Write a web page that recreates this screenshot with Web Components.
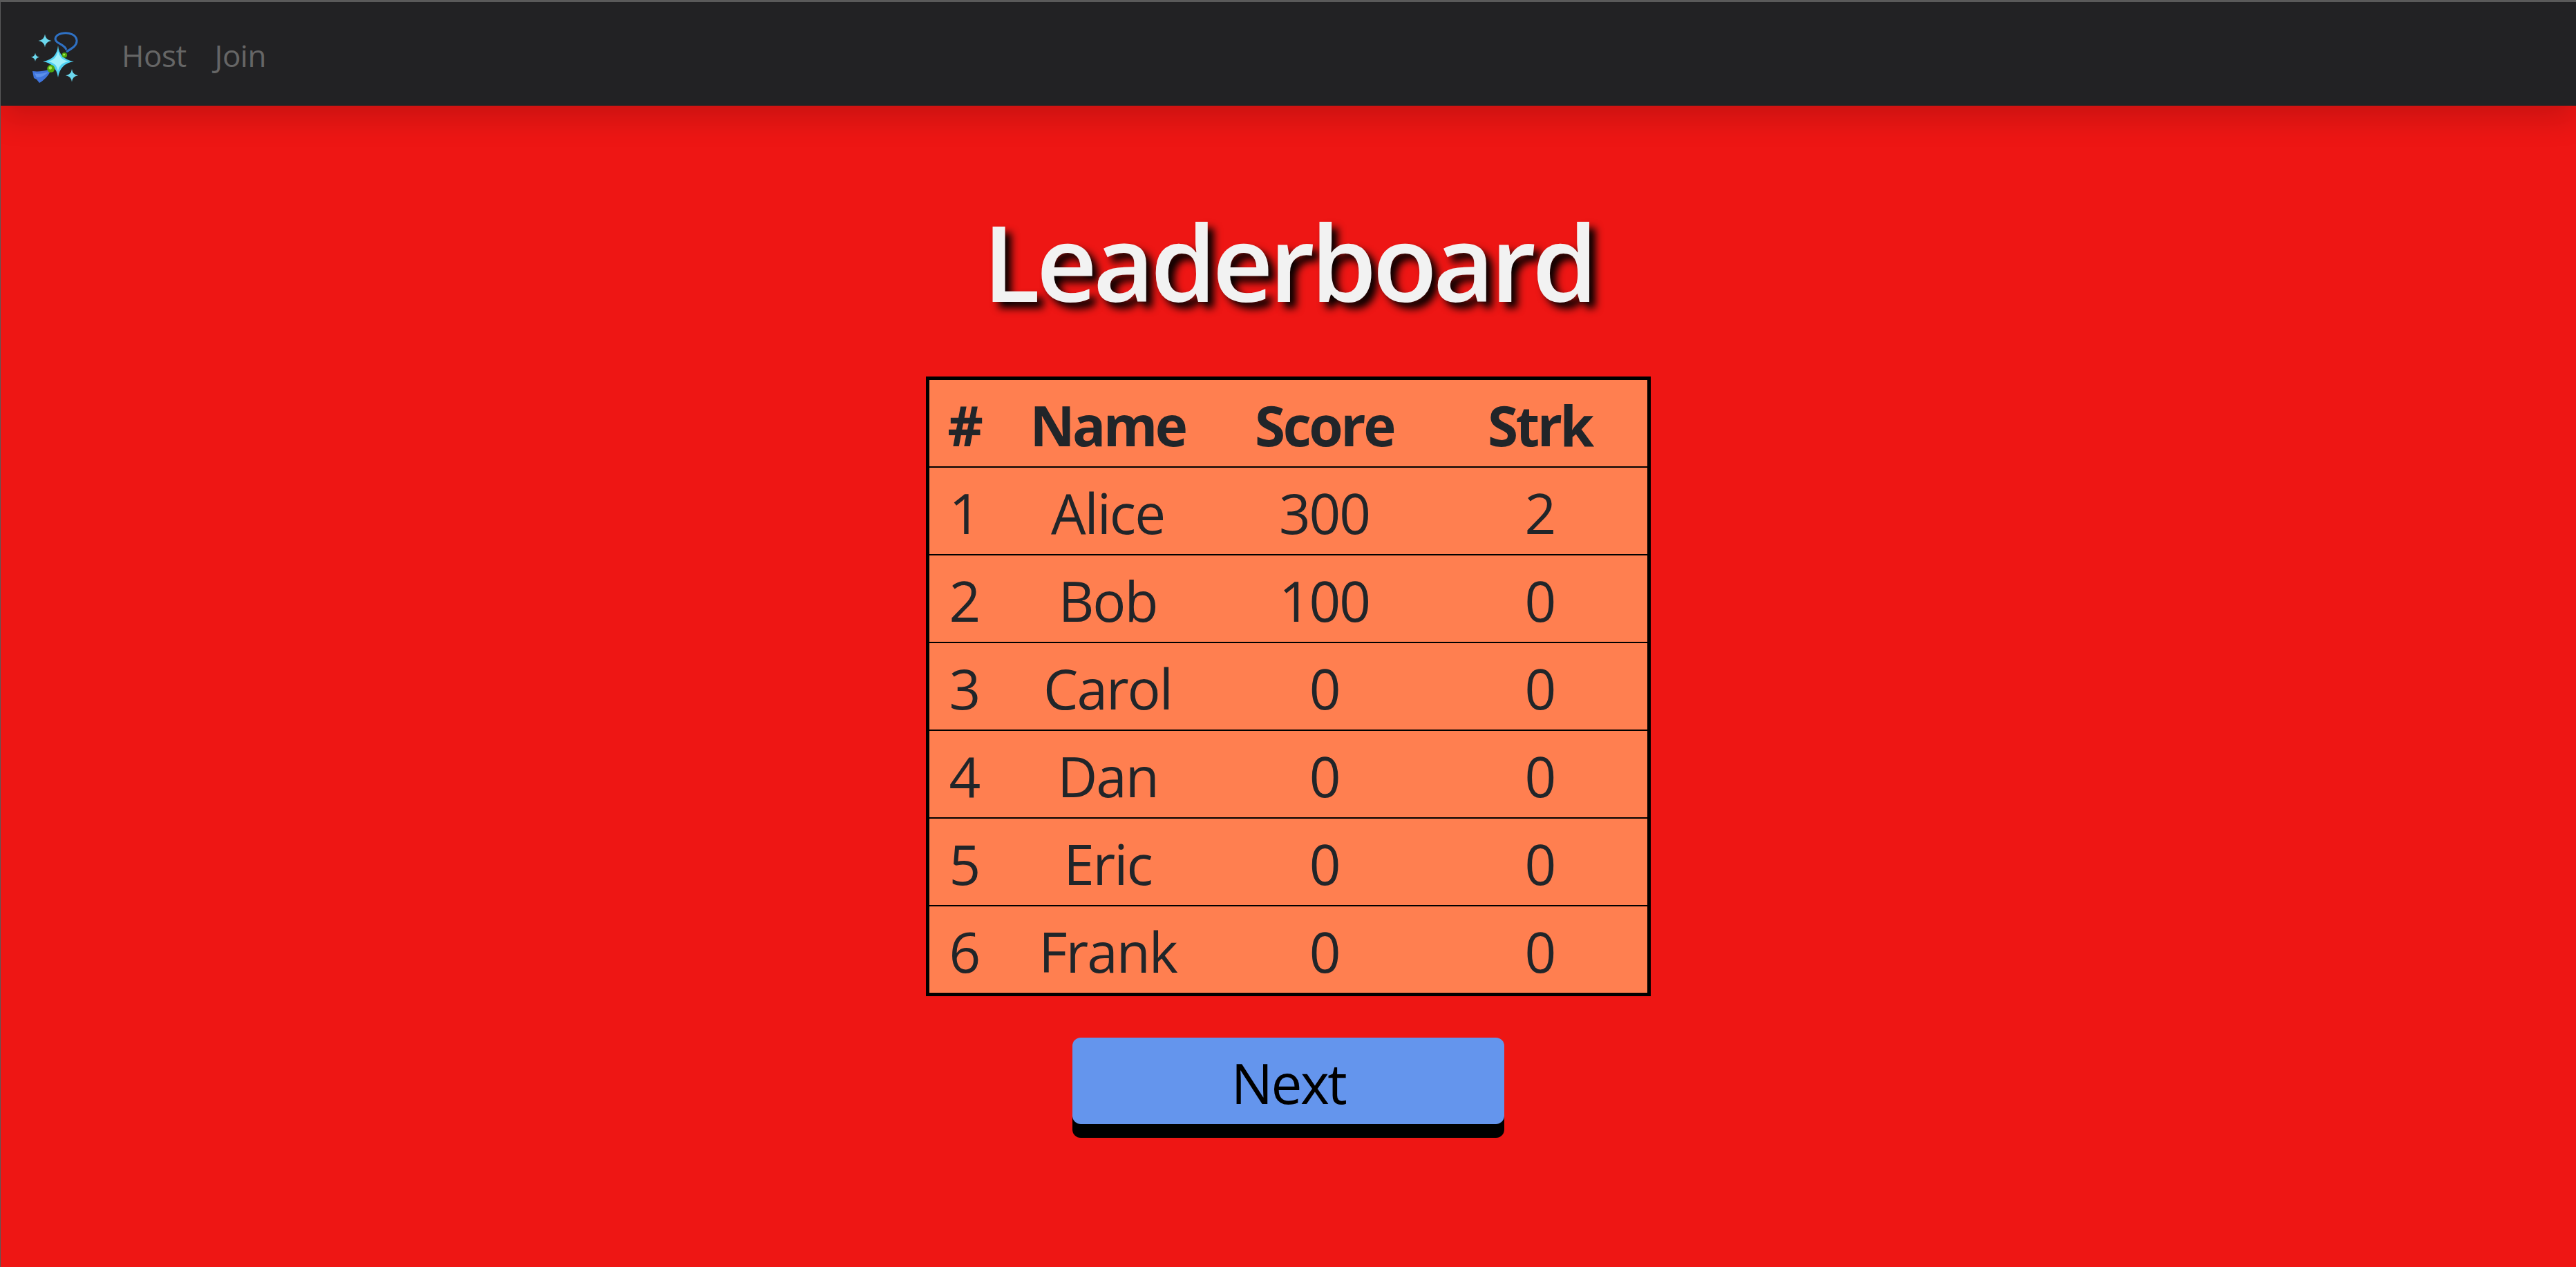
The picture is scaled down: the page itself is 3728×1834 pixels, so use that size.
<!DOCTYPE html>
<html>
<head>
<meta charset="utf-8">
<title>Leaderboard</title>
<style>
  html, body { margin: 0; height: 100%; }
  body { background: #ee1614; font-family: "Open Sans", "Noto Sans", sans-serif; overflow: hidden; box-sizing: border-box; border-left: 1px solid #5a5a5a; }
</style>
</head>
<body>
<app-nav>
  <a>Host</a>
  <a>Join</a>
</app-nav>
<leader-page>
  <span slot="title">Leaderboard</span>
  <score-table></score-table>
  <big-button slot="action">Next</big-button>
</leader-page>

<script>
(function () {
  const players = [
    ["1", "Alice", "300", "2"],
    ["2", "Bob", "100", "0"],
    ["3", "Carol", "0", "0"],
    ["4", "Dan", "0", "0"],
    ["5", "Eric", "0", "0"],
    ["6", "Frank", "0", "0"],
  ];

  class AppNav extends HTMLElement {
    constructor() {
      super();
      this.attachShadow({ mode: "open" }).innerHTML = `
        <style>
          :host {
            display: flex;
            align-items: center;
            box-sizing: border-box;
            height: 153px;
            background: #222224;
            border-top: 3px solid #5a5a5a;
            box-shadow: 0 20px 40px rgba(0, 0, 0, 0.15);
            position: relative;
            padding-left: 44px;
            color: #666;
            font-size: 44px;
            letter-spacing: -0.5px;
          }
          svg { width: 70px; height: 76px; display: block; margin-top: 12px; flex: none; }
          nav { display: flex; gap: 41px; margin-left: 61px; margin-top: 4px; }
          ::slotted(a) { display: block; }
        </style>
        <svg viewBox="45 46 70 76">
          <path d="M96 75 C104 70 112 66 111 58 C110 50 100 47 92 48 C83 49 78 54 81 59 C84 64 93 64 96 72" fill="none" stroke="#2f71c4" stroke-width="3"/>
          <path d="M84 66 Q86 86 107 89 Q87 92 84 112 Q81 92 62 89 Q82 86 84 66 Z" fill="#4fd0f2"/>
          <path d="M84 74 Q86 86 99 89 Q86 91 84 103 Q82 91 70 89 Q82 86 84 74 Z" fill="#a0f0fa"/>
          <path d="M65 49.5 Q66 58 74.5 59 Q66 60 65 68.5 Q64 60 55.5 59 Q64 58 65 49.5 Z" fill="#6bd8ee"/>
          <path d="M51 76.5 Q51.6 82 57 82.7 Q51.6 83.4 51 89 Q50.4 83.4 45 82.7 Q50.4 82 51 76.5 Z" fill="#6bd8ee"/>
          <path d="M104 100 Q105 108.3 113 109.3 Q105 110.3 104 118.5 Q103 110.3 95 109.3 Q103 108.3 104 100 Z" fill="#6bd8ee"/>
          <path d="M47 103 C55 104 63 103 70 101 L72 105 C69 110 64 116 57 120 L53 115 L49 113 Z" fill="#3f74db"/>
          <path d="M50 106 C57 108 64 106 70 104 C66 109 60 112 53 112 Z" fill="#5c90ea"/>
          <circle cx="73.7" cy="99.3" r="5.5" fill="#4ea60c"/><circle cx="72.8" cy="98.3" r="2.4" fill="#a5e84d"/>
          <circle cx="93.3" cy="79.7" r="3.8" fill="#4ea60c"/><circle cx="92.7" cy="79" r="1.6" fill="#a5e84d"/>
        </svg>
        <nav><slot></slot></nav>
      `;
    }
  }

  class LeaderPage extends HTMLElement {
    constructor() {
      super();
      this.attachShadow({ mode: "open" }).innerHTML = `
        <style>
          :host { display: flex; flex-direction: column; align-items: center; }
          h1 {
            margin: 135px 0 0;
            height: 257px;
            font-size: 153px;
            line-height: 180px;
            font-weight: 600;
            letter-spacing: -5.8px;
            color: #f2f2f2;
            text-shadow: 9px 9px 12px #000;
          }
          .action { margin-top: 60px; }
        </style>
        <h1><slot name="title"></slot></h1>
        <slot></slot>
        <div class="action"><slot name="action"></slot></div>
      `;
    }
  }

  class ScoreTable extends HTMLElement {
    constructor() {
      super();
      const rows = players.map((p) => `<tr>${p.map((c) => `<td>${c}</td>`).join("")}</tr>`).join("");
      this.attachShadow({ mode: "open" }).innerHTML = `
        <style>
          :host { display: block; }
          table {
            border-collapse: collapse;
            width: 1049px;
            table-layout: fixed;
            background: #ff7f50;
            color: #212529;
            border: 5px solid #000;
            font-size: 80px;
            letter-spacing: -2px;
          }
          th, td { height: 122px; padding: 3px 0 0; text-align: center; border-top: 2.5px solid #000; font-weight: 400; }
          th { font-weight: 700; border-top: 0; letter-spacing: -3.5px; }
          .c1 { width: 103px; } .c2 { width: 315px; } .c3 { width: 312px; }
        </style>
        <table>
          <colgroup><col class="c1"><col class="c2"><col class="c3"><col></colgroup>
          <tr><th>#</th><th>Name</th><th>Score</th><th>Strk</th></tr>
          ${rows}
        </table>
      `;
    }
  }

  class BigButton extends HTMLElement {
    constructor() {
      super();
      this.attachShadow({ mode: "open" }).innerHTML = `
        <style>
          :host { display: block; }
          button {
            display: block;
            width: 625px;
            height: 125px;
            margin-bottom: 20px;
            border: 0;
            padding: 3px 0 0;
            border-radius: 12px;
            background: #6495ed;
            color: #000;
            font: inherit;
            font-size: 80px;
            letter-spacing: -2.5px;
            box-shadow: 0 20px 0 #000;
          }
        </style>
        <button><slot></slot></button>
      `;
    }
  }

  customElements.define("app-nav", AppNav);
  customElements.define("leader-page", LeaderPage);
  customElements.define("score-table", ScoreTable);
  customElements.define("big-button", BigButton);
})();
</script>
</body>
</html>
